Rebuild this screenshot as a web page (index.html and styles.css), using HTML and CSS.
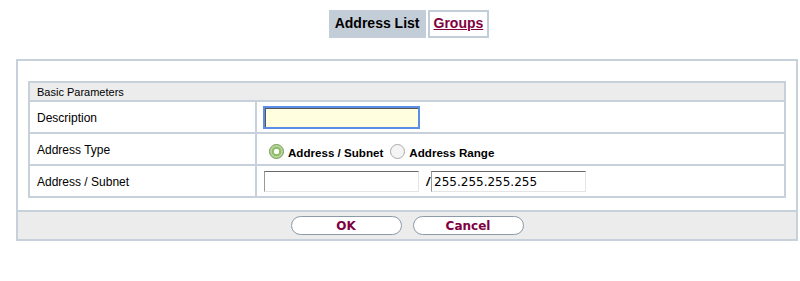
FILE: index.html
```html
<!DOCTYPE html>
<html lang="en">
<head>
  <meta charset="UTF-8">
  <title>Address List</title>
  <link rel="stylesheet" href="styles.css">
</head>
<body>
  <div class="page">
    <div class="tabs">
      <span class="tab active">Address List</span>
      <a class="tab" href="#">Groups</a>
    </div>

    <div class="panel">
      <table class="params">
        <tr>
          <th colspan="2">Basic Parameters</th>
        </tr>
        <tr>
          <td class="label">Description</td>
          <td><input type="text" class="field focus"></td>
        </tr>
        <tr>
          <td class="label">Address Type</td>
          <td>
            <div class="radios">
              <label><span class="radio checked"></span>Address / Subnet</label>
              <label><span class="radio"></span>Address Range</label>
            </div>
          </td>
        </tr>
        <tr>
          <td class="label">Address / Subnet</td>
          <td class="subnet">
            <input type="text" class="field">
            <span class="slash">/</span>
            <input type="text" class="field" value="255.255.255.255">
          </td>
        </tr>
      </table>
      <div class="footer">
        <button class="btn">OK</button>
        <button class="btn">Cancel</button>
      </div>
    </div>
  </div>
</body>
</html>
```

FILE: styles.css
```css
body {
  margin: 0;
  font-family: "Liberation Sans", Arial, sans-serif;
  font-size: 12px;
  color: #000;
  background: #fff;
}
.page {
  padding: 10px 2px 0 16px;
}
.tabs {
  display: flex;
  justify-content: center;
  gap: 2px;
  margin-left: 4px;
}
.tab {
  font-size: 14px;
  font-weight: bold;
  padding: 5px 6px 5px 6px;
  line-height: 17px;
}
.tab.active {
  background: #c3cdd7;
}
a.tab {
  color: #800040;
  border: 2px solid #c3cdd7;
  padding: 3px 4px 4px 4px;
}
.panel {
  margin-top: 21px;
  border: 2px solid #c6d1dc;
  padding-top: 20px;
}
.params {
  border-collapse: collapse;
  margin: 0 10px;
  width: calc(100% - 20px);
  border: 2px solid #c6d1dc;
}
.params th {
  background: #ececec;
  font-weight: normal;
  font-size: 11px;
  text-align: left;
  padding: 2px 7px 1px;
  height: 14px;
  border: 2px solid #c6d1dc;
}
.params td {
  border: 2px solid #c6d1dc;
  height: 29px;
  padding: 1px 6px 0;
}
.params td.label {
  width: 212px;
  padding-left: 7px;
}
.field {
  width: 149px;
  height: 17px;
  margin: 0;
  padding: 1px 2px;
  font-family: "DejaVu Sans", sans-serif;
  font-size: 12px;
  border: 1px solid #9a9a9a;
  border-top-color: #6a6a6a;
  border-right-color: #e4e4e4;
  border-bottom-color: #e4e4e4;
}
.field.focus {
  background: #ffffe0;
  border: 2px solid #5b8ee6;
  width: 149px;
  height: 17px;
  box-shadow: inset 1px 1px 0 #555;
}
.radios {
  display: flex;
  align-items: center;
  padding-top: 6px;
}
.radios label {
  font-weight: bold;
  font-size: 11.6px;
  display: inline-flex;
  align-items: center;
  margin-right: 2px;
}
.radio {
  display: inline-block;
  width: 13px;
  height: 13px;
  border-radius: 50%;
  border: 1px solid #aaa;
  background: #f4f4f4;
  margin: 0 4px 3px 5px;
}
.radio.checked {
  margin-left: 6px;
  border: 1px solid #7b9a55;
  background: radial-gradient(circle, #fff 0 2.5px, #8fbf6b 3px 4.5px, #b6d49c 5px);
}
.subnet {
  white-space: nowrap;
}
.params td.subnet {
  padding-left: 7px;
}
.slash {
  font-weight: bold;
  font-style: italic;
  margin: 0 -2px 0 4px;
}
.footer {
  margin-top: 12px;
  background: #ececec;
  border-top: 2px solid #c6d1dc;
  display: flex;
  justify-content: center;
  gap: 11px;
  padding: 4px 0 4px;
}
.btn {
  width: 111px;
  height: 19px;
  border: 1px solid #8c9aa8;
  border-radius: 10px;
  background: #fff;
  color: #800040;
  font-family: "DejaVu Sans", sans-serif;
  font-weight: bold;
  font-size: 12px;
  padding: 0;
}
```
